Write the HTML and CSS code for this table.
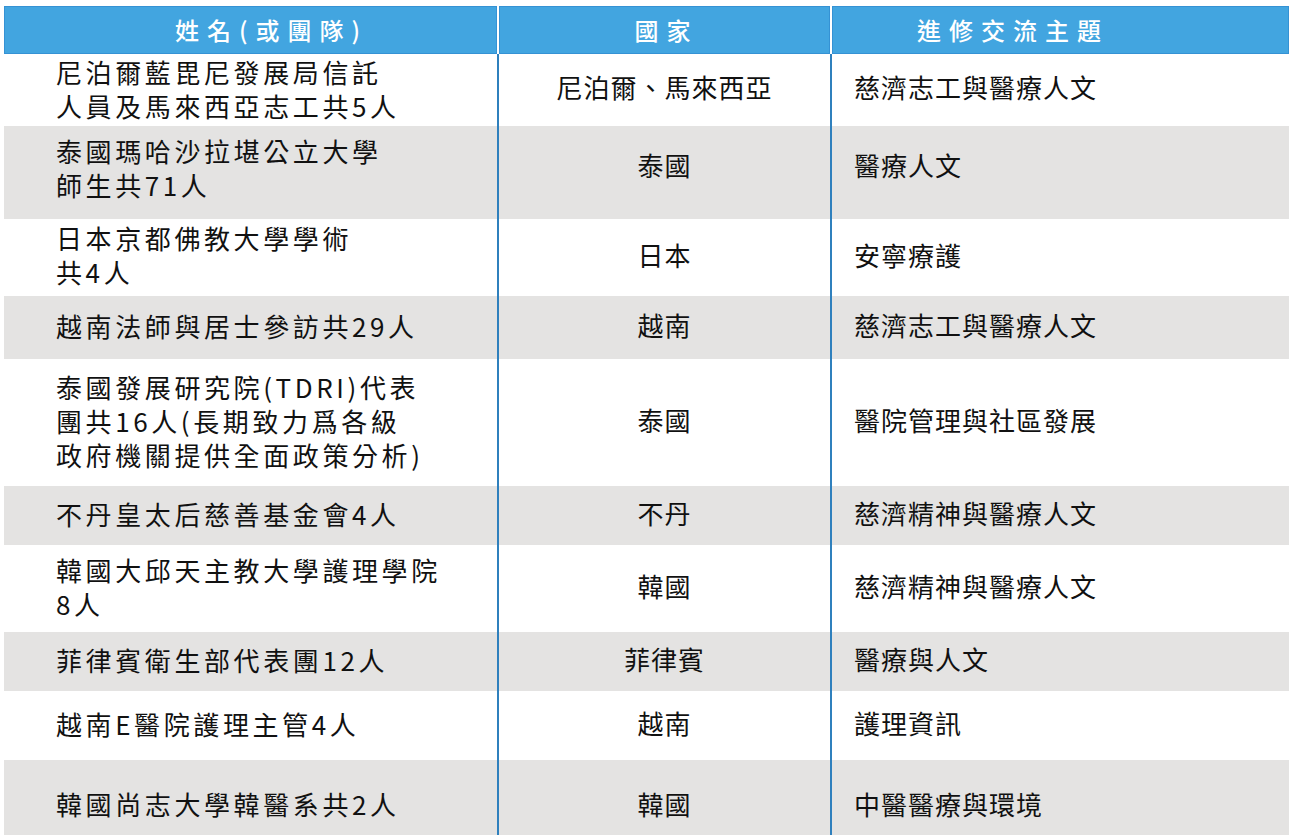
FILE: index.html
```html
<!DOCTYPE html>
<html lang="zh-Hant">
<head>
<meta charset="utf-8">
<title>進修交流</title>
<link rel="stylesheet" href="styles.css">
</head>
<body>
<div class="table">
  <div class="row head">
    <div class="cell c1">姓名(或團隊)</div>
    <div class="cell c2">國家</div>
    <div class="cell c3">進修交流主題</div>
  </div>
  <div class="row r1">
    <div class="cell c1">尼泊爾藍毘尼發展局信託<br>人員及馬來西亞志工共5人</div>
    <div class="cell c2">尼泊爾、馬來西亞</div>
    <div class="cell c3">慈濟志工與醫療人文</div>
  </div>
  <div class="row r2 alt">
    <div class="cell c1">泰國瑪哈沙拉堪公立大學<br>師生共71人</div>
    <div class="cell c2">泰國</div>
    <div class="cell c3">醫療人文</div>
  </div>
  <div class="row r3">
    <div class="cell c1">日本京都佛教大學學術<br>共4人</div>
    <div class="cell c2">日本</div>
    <div class="cell c3">安寧療護</div>
  </div>
  <div class="row r4 alt">
    <div class="cell c1">越南法師與居士參訪共29人</div>
    <div class="cell c2">越南</div>
    <div class="cell c3">慈濟志工與醫療人文</div>
  </div>
  <div class="row r5">
    <div class="cell c1">泰國發展研究院(TDRI)代表<br>團共16人(長期致力爲各級<br>政府機關提供全面政策分析)</div>
    <div class="cell c2">泰國</div>
    <div class="cell c3">醫院管理與社區發展</div>
  </div>
  <div class="row r6 alt">
    <div class="cell c1">不丹皇太后慈善基金會4人</div>
    <div class="cell c2">不丹</div>
    <div class="cell c3">慈濟精神與醫療人文</div>
  </div>
  <div class="row r7">
    <div class="cell c1">韓國大邱天主教大學護理學院<br>8人</div>
    <div class="cell c2">韓國</div>
    <div class="cell c3">慈濟精神與醫療人文</div>
  </div>
  <div class="row r8 alt">
    <div class="cell c1">菲律賓衛生部代表團12人</div>
    <div class="cell c2">菲律賓</div>
    <div class="cell c3">醫療與人文</div>
  </div>
  <div class="row r9">
    <div class="cell c1">越南E醫院護理主管4人</div>
    <div class="cell c2">越南</div>
    <div class="cell c3">護理資訊</div>
  </div>
  <div class="row r10 alt">
    <div class="cell c1">韓國尚志大學韓醫系共2人</div>
    <div class="cell c2">韓國</div>
    <div class="cell c3">中醫醫療與環境</div>
  </div>
</div>
</body>
</html>
```
FILE: styles.css
```css
html, body {
  margin: 0;
  padding: 0;
  background: #ffffff;
}

body {
  font-family: "Noto Sans CJK TC", "Noto Sans", sans-serif;
  color: #111111;
}

.table {
  padding: 6px 0 0 4px;
  width: 1285px;
}

.row {
  display: grid;
  grid-template-columns: 493px 333px 459px;
}

.row.alt {
  background: #e4e3e2;
}

.cell {
  display: flex;
  align-items: center;
  box-sizing: border-box;
  font-size: 26px;
  line-height: 34px;
}

.cell.c2,
.cell.c3 {
  border-left: 2px solid #2f80bd;
  padding-bottom: 6px;
}

.cell.c1 {
  padding-left: 52px;
  padding-bottom: 3px;
  letter-spacing: 3.6px;
}

.cell.c2 {
  justify-content: center;
  letter-spacing: 1px;
}

.cell.c3 {
  padding-left: 22px;
  letter-spacing: 1px;
}

/* header */
.head .cell {
  height: 48px;
  padding-bottom: 0;
  background: #42a5e0;
  box-shadow: inset 0 0 0 1px #3592d4;
  color: #ffffff;
  font-size: 24px;
  font-weight: 500;
  letter-spacing: 8px;
  line-height: 48px;
}

.head .cell.c2,
.head .cell.c3 {
  border-left: 2px solid #ffffff;
}

.head .cell.c1 {
  padding-left: 171px;
}

.head .cell.c2 {
  justify-content: center;
  padding-left: 4px;
}

.head .cell.c3 {
  padding-left: 85px;
}

/* row heights */
.r1 { height: 72px; }
.r2 { height: 93px; }
.r3 { height: 77px; }
.r4 { height: 63px; }
.r5 { height: 127px; }
.r6 { height: 59px; }
.r7 { height: 87px; }
.r8 { height: 59px; }
.r9 { height: 69px; }
.r10 { height: 75px; }

.r2 .cell.c1 { padding-bottom: 9px; }
.r2 .cell.c2,
.r2 .cell.c3 { padding-bottom: 15px; }
.r3 .cell.c1 { padding-bottom: 6px; }
.r10 .cell { padding-top: 12px; padding-bottom: 0; }
```
